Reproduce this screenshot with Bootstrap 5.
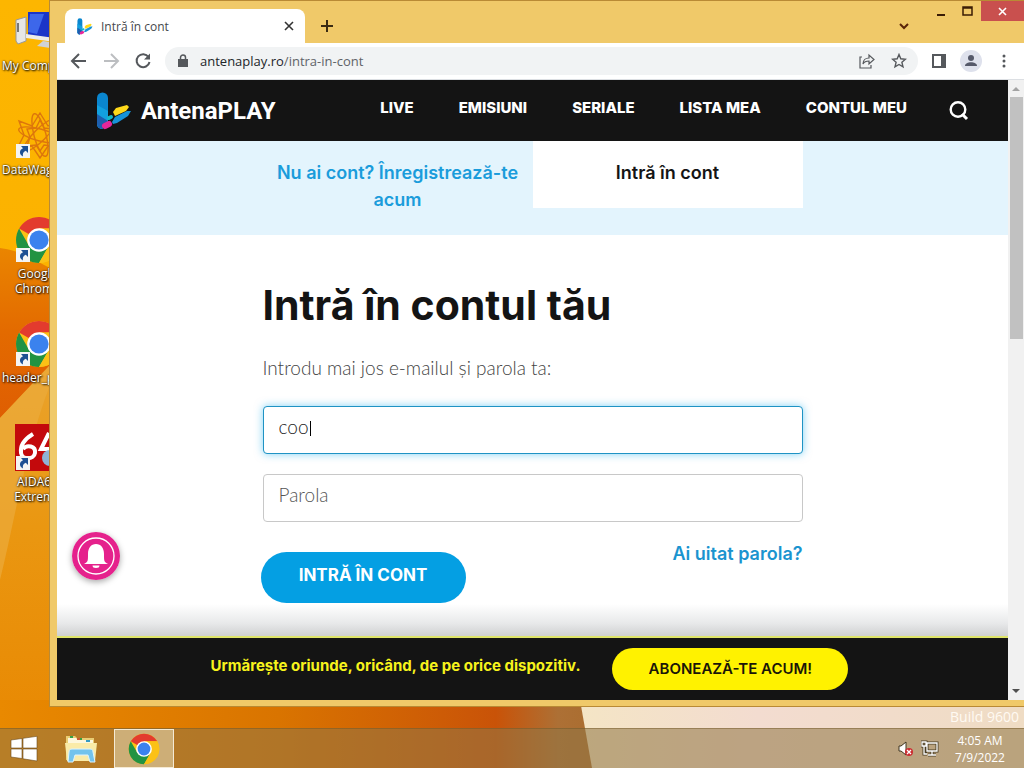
<!DOCTYPE html>
<html lang="ro">
<head>
<meta charset="utf-8">
<meta name="viewport" content="width=device-width, initial-scale=1">
<title>Intră în cont</title>
<link href="https://cdn.jsdelivr.net/npm/bootstrap@5.3.0/dist/css/bootstrap.min.css" rel="stylesheet">
<script src="https://cdn.jsdelivr.net/npm/bootstrap@5.3.0/dist/js/bootstrap.bundle.min.js" defer></script>
<style>
  body { font-family: "Open Sans", "Noto Sans", sans-serif; font-size: 12px; line-height: 15px; background: #e98a00; }
  .desk { min-height: 100vh; }
  .wallpaper { z-index: 0; }
  /* desktop shortcuts */
  .shortcuts { width: 75px; padding-top: 8px; z-index: 1; }
  .shortcut { height: 104px; color: #fff; text-shadow: 1px 1px 2px #000, 0 0 2px #000; white-space: nowrap; text-decoration: none; }
  .shortcut svg { width: 48px; height: 48px; margin-left: 15px; display: block; margin-bottom: 2px; }
  .shortcut-label { margin-left: 2px; }
  /* browser window */
  .browser { left: 49px; top: 0; right: 0; bottom: 61px; background: #f0c969; border: 1px solid #b98a35; border-right: 0; padding: 0 0 6px 7px; z-index: 2; }
  .titlebar { height: 42px; padding-left: 8px; }
  .tab-chip { width: 240px; height: 34px; background: #fff; border-radius: 8px 8px 0 0; padding: 0 10px 0 12px; color: #45484c; }
  .plain { border: 0; background: transparent; padding: 0; line-height: 0; display: block; }
  .wincontrols { height: 20px; }
  .closer { width: 43px; height: 20px; background: #c9504e; }
  .toolbar-row { height: 37px; background: #fff; padding: 0 14px 0 12px; border-bottom: 1px solid #dcdfe3; }
  .omnibox { height: 28px; border-radius: 14px; background: #f1f3f4; padding: 0 11px 0 13px; margin: 0 14px 0 12px; }
  .address { color: #5f6368; font-size: 13px; }
  .avatar { width: 22px; height: 22px; background: #dee1ec; margin: 0 16px 0 14px; }
  /* page */
  .site { font-family: Inter, "Open Sans", sans-serif; background: #fff; color: #141414; }
  .site-nav { height: 61px; background: #141414; padding: 0 39px 0 39px; }
  .brand-name { font: 700 24px/30px Roboto, sans-serif; color: #fff; margin-left: 9px; }
  .nav-items { gap: 45px; font-weight: 800; font-size: 15px; line-height: 18px; padding-bottom: 6px; }
  .nav-items a { color: #fff; text-decoration: none; white-space: nowrap; }
  .find-btn { margin-left: 42px; }
  .tabs-band { background: #e3f4fd; height: 94px; }
  .form-col { width: 100%; max-width: 540px; }
  .tab-cell { font-weight: 600; font-size: 18px; line-height: 27px; padding: 18px 8px 0; color: #1a9cdb; text-decoration: none; text-align: center; }
  .tab-on { background: #fff; color: #141414; height: 67px; }
  .site h1 { font-size: 41px; line-height: 48px; font-weight: 700; margin: 46px 0 25px; }
  .intro { font-family: Lato, sans-serif; font-weight: 300; font-size: 19px; line-height: 28px; margin-bottom: 24px; color: #444; }
  .site .form-control { height: 48px; border: 1px solid #c8c8c8; border-radius: 4px; padding: 0 15px 8px; margin-bottom: 20px; font-family: Lato, sans-serif; font-weight: 300; font-size: 19px; color: #222; caret-color: transparent; box-shadow: none; }
  .site .form-control.active-field { border-color: #1f93c4; box-shadow: 0 0 8px rgba(0, 165, 235, .5); }
  .site .form-control::placeholder { color: #555; }
  .caret { left: 47px; top: 15px; width: 1px; height: 15px; background: #000; }
  .form-actions { margin-top: 30px; }
  .site .btn-enter { background: #049fe3; color: #fff; font-weight: 700; font-size: 17px; line-height: 24px; height: 51px; width: 205px; padding: 0 0 6px; margin-left: -2px; }
  .forgot { font-weight: 600; font-size: 18px; line-height: 24px; color: #1a94cf; text-decoration: none; margin-top: -10px; }
  .bell { left: 15px; bottom: 120px; width: 48px; height: 48px; border-radius: 50%; box-shadow: 0 2px 6px rgba(0, 0, 0, .35); }
  .fade-strip { height: 32px; background: linear-gradient(rgba(255,255,255,0), #e8e9ea 60%, #cfd0d1); }
  .promo { height: 64px; background: #141414; border-top: 2px solid #dfe56a; gap: 32px; padding-right: 6px; }
  .promo-text { color: #f7f31c; font-weight: 700; font-size: 15px; line-height: 20px; padding-bottom: 6px; }
  .site .btn-promo { background: #fff200; color: #1a1508; font-weight: 600; font-size: 15px; line-height: 20px; width: 236px; height: 42px; padding: 0; }
  .scroller { width: 16px; background: #f1f1f1; }
  .scroller-thumb { width: 13px; height: 39%; background: #c1c1c1; }
  /* taskbar */
  .taskbar { height: 40px; background: rgba(145, 118, 70, .56); border-top: 1px solid rgba(110, 85, 35, .45); z-index: 3; }
  .task-active { width: 60px; height: 39px; border: 1px solid #f5ead4; background: #cdae77; }
  .build { right: 5px; bottom: 42px; font-size: 14px; line-height: 18px; color: #fffaf3; z-index: 1; }
  .tray { gap: 6px; }
  .clock { color: #fff; line-height: 17px; width: 56px; margin-left: 7px; }
</style>
</head>
<body>
<svg width="0" height="0" class="position-absolute" aria-hidden="true">
  <defs>
    <symbol id="chrome" viewBox="0 0 48 48">
      <circle cx="24" cy="24" r="23" fill="#fbc116"/>
      <path d="M24 24 4.1 12.5A23 23 0 0 1 43.900 12.500L24 12.500Z" fill="#e33b2e"/>
      <path d="M4.100 12.500A23 23 0 0 0 24 47L34 29.700 24 24 14 29.700Z" fill="#229342"/>
      <path d="M24 47A23 23 0 0 0 43.900 12.500H24L34 29.700Z" fill="#fbc116"/>
      <circle cx="24" cy="24" r="11.800" fill="#fff"/><circle cx="24" cy="24" r="9.600" fill="#3b82ee"/>
    </symbol>
    <symbol id="link-arrow" viewBox="0 0 14 14">
      <path d="M0 0h14v14H0z" fill="#f4f4f4"/><path d="M5 2h7v7L9.800 6.800C7 8 6.500 10 7 12.500 2.500 10 3.500 5.500 7 4.200Z" fill="#1d4f93"/>
    </symbol>
    <symbol id="play-mark" viewBox="0 0 36 38">
      <path d="M1 6a5.500 5.500 0 0 1 11 0v25l-6 6a5 5 0 0 1-5-5Z" fill="#0a86cf"/>
      <path d="M1 13 12 19v12l-6 6a5 5 0 0 1-5-5Z" fill="#12a0df"/>
      <path d="M1 22 12 29 6 37a5 5 0 0 1-5-5Z" fill="#1d5fae"/>
      <path d="m9 34 4-2" stroke="#e6279a" stroke-width="6" stroke-linecap="round"/>
      <path d="m13 26 2-1" stroke="#13b6c9" stroke-width="4" stroke-linecap="round"/>
      <path d="m17 20 3-4 11-3 2 2-3 4-11 5Z" fill="#ffd91a"/>
      <path d="m16 30 3-5 12-6h4l-3 5-11 7-4 1Z" fill="#1793d8"/>
    </symbol>
  </defs>
</svg>

<div class="desk d-flex flex-column position-relative overflow-hidden">
  <svg class="wallpaper position-absolute top-0 start-0 w-100 h-100" viewBox="0 0 1024 768" preserveAspectRatio="none" aria-hidden="true">
    <defs>
      <linearGradient id="sky" x2="0" y2="1"><stop stop-color="#fdb600"/><stop offset="1" stop-color="#f9aa00"/></linearGradient>
      <linearGradient id="wave" x2="0" y2="1"><stop stop-color="#ea8500"/><stop offset=".5" stop-color="#e36a00"/><stop offset="1" stop-color="#df5e02"/></linearGradient>
      <linearGradient id="petal" x2="0" y2="1"><stop stop-color="#eaa32c"/><stop offset=".4" stop-color="#ea9711"/><stop offset="1" stop-color="#e88600"/></linearGradient>
      <linearGradient id="strip"><stop stop-color="#e98900"/><stop offset=".45" stop-color="#d97400"/><stop offset=".8" stop-color="#c95308"/><stop offset=".9" stop-color="#ad7035"/><stop offset="1" stop-color="#a86b2c"/></linearGradient>
      <linearGradient id="cream"><stop stop-color="#f4e5c5"/><stop offset=".4" stop-color="#f3dcd0"/><stop offset="1" stop-color="#efdcc4"/></linearGradient>
    </defs>
    <path d="M0 0h1024v768H0Z" fill="url(#sky)"/>
    <path d="M0 248c20 2 34 12 50 20v150H0Z" fill="url(#wave)"/>
    <path d="M0 418 50 365v403H0Z" fill="url(#petal)"/>
    <path d="M0 418 50 365v20C25 450 15 520 0 580Z" fill="#ebab3c" opacity=".7"/>
    <path d="M0 700h600l20 68H0Z" fill="url(#strip)"/>
    <path d="M580 700h444v68H592Z" fill="url(#cream)"/>
  </svg>

  <nav class="shortcuts position-relative flex-grow-1" aria-label="Desktop">
    <a href="#" class="shortcut d-block"><svg viewBox="0 0 48 48" aria-hidden="true"><path d="m1 12 10-3v24L3 36l-2-3Z" fill="#e7e7e5" stroke="#999"/><path d="M3 15v9" stroke="#777" stroke-width="2"/><path d="M13 4h34v29l-34-6Z" fill="#1b35c8"/><path d="M15 6h14l-7 20-9-2Z" fill="#3d67ea"/><path d="m11 26 36 5v4l-36-5Z" fill="#ececea"/><path d="m28 33 14 2v6l-20-3Z" fill="#d0d2d6"/></svg><span class="shortcut-label">My Computer</span></a>
    <a href="#" class="shortcut d-block"><svg viewBox="0 0 48 48" aria-hidden="true"><g fill="none" stroke="#dd760c" stroke-width="1.400"><path d="m25 1 8 13 13-5-5 14 6 12-14-1-8 12-8-12-14 1 6-12-5-14 13 5ZM25 8l4 8 9 1-3 8 3 9-9-1-4 6-4-6-9 1 3-9-3-8 9-1Z"/><ellipse cx="25" cy="23" rx="22" ry="6" transform="rotate(15 25 23)"/><ellipse cx="25" cy="23" rx="22" ry="6" transform="rotate(75 25 23)"/><ellipse cx="25" cy="23" rx="22" ry="6" transform="rotate(135 25 23)"/></g><use href="#link-arrow" x="1" y="32" width="14" height="14"/></svg><span class="shortcut-label">DataWagon</span></a>
    <a href="#" class="shortcut d-block text-center"><svg viewBox="0 0 48 48" aria-hidden="true"><use href="#chrome" width="48" height="48"/><use href="#link-arrow" x="1" y="32" width="14" height="14"/></svg>Google<br>Chrome</a>
    <a href="#" class="shortcut d-block"><svg viewBox="0 0 48 48" aria-hidden="true"><use href="#chrome" width="48" height="48"/><use href="#link-arrow" x="1" y="32" width="14" height="14"/></svg><span class="shortcut-label">header_p</span></a>
    <a href="#" class="shortcut d-block text-center"><svg viewBox="0 0 48 48" aria-hidden="true"><path d="M0 0h48v47H0Z" fill="#c3090c"/><path d="M18 10C8 16 5 22 6 29c1 7 13 7 14 0 1-7-8-9-12-4M34 9 26 25h12M36 12v22" fill="none" stroke="#fff" stroke-width="4"/><circle cx="35" cy="34" r="8" fill="#8fb3d6"/><use href="#link-arrow" x="1" y="32" width="14" height="14"/></svg>AIDA64<br>Extreme</a>
  </nav>
  <div class="build position-absolute">Build 9600</div>

  <section class="browser position-absolute d-flex flex-column" aria-label="Browser">
    <div class="titlebar d-flex align-items-end flex-shrink-0">
      <div class="tab-chip d-flex align-items-center">
        <svg width="16" height="17" aria-hidden="true"><use href="#play-mark"/></svg>
        <span class="ms-2 flex-grow-1">Intră în cont</span>
        <button class="plain" aria-label="Close tab"><svg width="12" height="12" viewBox="0 0 12 12" stroke="#333" stroke-width="1.600"><path d="m2 2 8 8m0-8-8 8"/></svg></button>
      </div>
      <button class="plain ms-3 mb-2" aria-label="New tab"><svg width="14" height="16" viewBox="0 0 14 16" stroke="#3a2a12" stroke-width="2"><path d="M6 1v12M0 7h12"/></svg></button>
      <div class="ms-auto align-self-stretch d-flex">
        <button class="plain align-self-end mb-2 me-3" aria-label="Tab search"><svg width="18" height="16" viewBox="0 0 18 16" fill="none" stroke="#5a2408" stroke-width="2"><path d="m7 5 4 4 4-4"/></svg></button>
        <div class="wincontrols d-flex align-items-center">
          <button class="plain mx-2" aria-label="Minimize"><svg width="18" height="16" viewBox="0 0 18 16"><path d="M2 11h8v2H2z" fill="#3a1c05"/></svg></button>
          <button class="plain me-2" aria-label="Maximize"><svg width="12" height="12" viewBox="0 0 12 12"><path d="M2 2h9v8H2zM2 3h9" fill="none" stroke="#3a1c05" stroke-width="1.500"/></svg></button>
          <button class="plain closer" aria-label="Close"><svg width="9" height="9" viewBox="0 0 9 9" stroke="#fff" stroke-width="1.600"><path d="m1 1 7 7m0-7L1 8"/></svg></button>
        </div>
      </div>
    </div>
    <div class="toolbar-row d-flex align-items-center flex-shrink-0">
      <button class="plain" aria-label="Back"><svg width="20" height="20" viewBox="0 0 20 20" fill="none" stroke="#55585c" stroke-width="2"><path d="M17 10H4m6-7-7 7 7 7"/></svg></button>
      <button class="plain mx-2 px-1" aria-label="Forward"><svg width="20" height="20" viewBox="0 0 20 20" fill="none" stroke="#bcbec1" stroke-width="2"><path d="M3 10h13m-6-7 7 7-7 7"/></svg></button>
      <button class="plain" aria-label="Reload"><svg width="20" height="20" viewBox="0 0 20 20" fill="none" stroke="#55585c" stroke-width="2"><path d="M15.500 6A6.500 6.500 0 1 0 16.500 11"/><path d="M17 2.500v6h-6Z" fill="#55585c" stroke="none"/></svg></button>
      <div class="omnibox d-flex align-items-center flex-grow-1">
        <svg width="10" height="14" viewBox="0 0 10 14" aria-hidden="true"><path d="M0 5h10v8H0z" fill="#55585c"/><path d="M2.500 6V3.500a2.500 2.500 0 0 1 5 0V6" fill="none" stroke="#55585c" stroke-width="1.500"/></svg>
        <span class="address flex-grow-1 ms-2 ps-1"><span class="text-dark">antenaplay.ro</span>/intra-in-cont</span>
        <button class="plain me-3" aria-label="Share"><svg width="16" height="16" viewBox="0 0 16 16" fill="none" stroke="#55585c" stroke-width="1.200"><path d="M3 4H1v11h11v-3M4 11c0-4 3-6 6-6V2l5 4.500-5 4.500V8c-3 0-5 1-6 3Z"/></svg></button>
        <button class="plain" aria-label="Bookmark"><svg width="16" height="16" viewBox="0 0 16 16" fill="none" stroke="#55585c" stroke-width="1.400"><path d="m8 1.500 1.800 4.300 4.700.4-3.600 3.100 1.100 4.600L8 11.500l-4 2.400 1.100-4.600L1.500 6.200l4.700-.4Z"/></svg></button>
      </div>
      <button class="plain" aria-label="Side panel"><svg width="14" height="14" viewBox="0 0 14 14"><path d="M1 1h12v12H1z" fill="#fff" stroke="#55585c" stroke-width="2"/><path d="M9 1h4v12H9z" fill="#55585c"/></svg></button>
      <button class="plain avatar rounded-circle" aria-label="Profile"><svg width="22" height="22" viewBox="0 0 22 22" fill="#55596a"><circle cx="11" cy="8" r="3"/><path d="M5 16c0-5 12-5 12 0Z"/></svg></button>
      <button class="plain" aria-label="Menu"><svg width="12" height="16" viewBox="0 0 12 16" fill="#55585c"><circle cx="6" cy="3" r="1.500"/><circle cx="6" cy="8" r="1.500"/><circle cx="6" cy="13" r="1.500"/></svg></button>
    </div>

    <div class="d-flex flex-grow-1 overflow-hidden">
      <main class="site d-flex flex-column flex-grow-1 position-relative overflow-hidden">
        <header class="site-nav d-flex align-items-center flex-shrink-0">
          <a href="#" class="d-flex align-items-center text-decoration-none"><svg width="36" height="38" aria-hidden="true"><use href="#play-mark"/></svg><span class="brand-name">AntenaPLAY</span></a>
          <nav class="nav-items d-flex ms-auto" aria-label="Principal"><a href="#">LIVE</a><a href="#">EMISIUNI</a><a href="#">SERIALE</a><a href="#">LISTA MEA</a><a href="#">CONTUL MEU</a></nav>
          <button class="plain find-btn" aria-label="Caută"><svg width="20" height="20" viewBox="0 0 20 20" fill="none" stroke="#fff" stroke-width="2.400"><circle cx="9" cy="8.500" r="7.300"/><path d="m13 13 5 5" stroke-width="3"/></svg></button>
        </header>
        <div class="tabs-band flex-shrink-0">
          <div class="form-col mx-auto row g-0">
            <a href="#" class="tab-cell col-6">Nu ai cont? Înregistrează-te acum</a>
            <a href="#" class="tab-cell tab-on col-6" aria-current="page">Intră în cont</a>
          </div>
        </div>
        <form class="form-col mx-auto flex-grow-1">
          <h1>Intră în contul tău</h1>
          <p class="intro">Introdu mai jos e-mailul și parola ta:</p>
          <div class="position-relative"><input type="text" class="form-control active-field" value="coo" aria-label="E-mail"><span class="caret position-absolute"></span></div>
          <input type="password" class="form-control" placeholder="Parola" aria-label="Parola">
          <div class="form-actions d-flex justify-content-between align-items-start">
            <button type="button" class="btn rounded-pill btn-enter">INTRĂ ÎN CONT</button>
            <a href="#" class="forgot">Ai uitat parola?</a>
          </div>
        </form>
        <button class="plain bell position-absolute" aria-label="Notificări"><svg width="48" height="48" viewBox="0 0 48 48"><circle cx="24" cy="24" r="24" fill="#e5218c"/><circle cx="24" cy="24" r="18" fill="none" stroke="#fff" stroke-width="1.300"/><path d="M12 32c4-2 4-3 4-10 0-6 3-10 8-10s8 4 8 10c0 7 0 8 4 10ZM20.500 33.500h7a3.500 2.500 0 0 1-7 0Z" fill="#fff"/></svg></button>
        <div class="fade-strip flex-shrink-0"></div>
        <footer class="promo d-flex align-items-center justify-content-center flex-shrink-0">
          <span class="promo-text">Urmărește oriunde, oricând, de pe orice dispozitiv.</span>
          <button type="button" class="btn rounded-pill btn-promo">ABONEAZĂ-TE ACUM!</button>
        </footer>
      </main>
      <div class="scroller d-flex flex-column align-items-center flex-shrink-0" aria-hidden="true">
        <svg width="16" height="17" viewBox="0 0 16 17" class="flex-shrink-0"><path d="m4 11 4-4 4 4Z" fill="#a3a3a3"/></svg>
        <div class="scroller-thumb flex-shrink-0"></div>
        <svg width="16" height="17" viewBox="0 0 16 17" class="mt-auto flex-shrink-0"><path d="m4 6 4 4 4-4Z" fill="#505050"/></svg>
      </div>
    </div>
  </section>

  <footer class="taskbar position-relative d-flex align-items-center flex-shrink-0">
    <button class="plain ms-2" aria-label="Start"><svg width="32" height="32" viewBox="0 0 32 32" fill="#fff" stroke="#6b4c1d" stroke-width=".6"><path d="M3 7 14 5.500V15H3ZM15 5.300 29 3.300V15H15ZM3 16h11v9.500L3 24ZM15 16h14v12L15 25.800Z"/></svg></button>
    <button class="plain ms-4" aria-label="File Explorer"><svg width="34" height="32" viewBox="0 0 34 32"><path d="M2 3h9l2 2h17v22H2Z" fill="#e9cd74"/><path d="M4 5h8l2 2h15v4H4Z" fill="#fdf7dc"/><path d="M6 4h3M14 6h4" stroke="#35a247" stroke-width="2"/><path d="M13 6h3" stroke="#cb5b35" stroke-width="2"/><path d="M22 8h4" stroke="#369bc2" stroke-width="2"/><path d="M1 10h32l-2 18H3Z" fill="#faeba8"/><path d="M5 19c0-2 1-3 3-3h18c2 0 3 1 3 3l2 10h-5l-2-7H11l-2 7H4Z" fill="#73c3ec" stroke="#ddf3ff"/></svg></button>
    <button class="plain task-active ms-3" aria-label="Google Chrome"><svg width="32" height="32"><use href="#chrome"/></svg></button>
    <div class="tray ms-auto d-flex align-items-center pe-3">
      <svg width="18" height="18" viewBox="0 0 18 18" aria-hidden="true"><path d="M2 6h2l5-4v13l-5-4H2Z" fill="#fff" stroke="#3f3520"/><circle cx="12" cy="12" r="4" fill="#cb2c30"/><path d="m10 10 4 4m0-4-4 4" stroke="#fff" stroke-width="1.300"/></svg>
      <svg width="18" height="18" viewBox="0 0 18 18" aria-hidden="true"><path d="M6 3h10v8H6zM11 11v4m-4 0h8M1 2h4v4H1zM3 6v8h3" fill="none" stroke="#4a3e25" stroke-width="3"/><path d="M6 3h10v8H6zM11 11v4m-4 0h8M1 2h4v4H1zM3 6v8h3" fill="none" stroke="#fff" stroke-width="1.300"/></svg>
      <div class="clock text-center">4:05 AM<br>7/9/2022</div>
    </div>
  </footer>
</div>
</body>
</html>
